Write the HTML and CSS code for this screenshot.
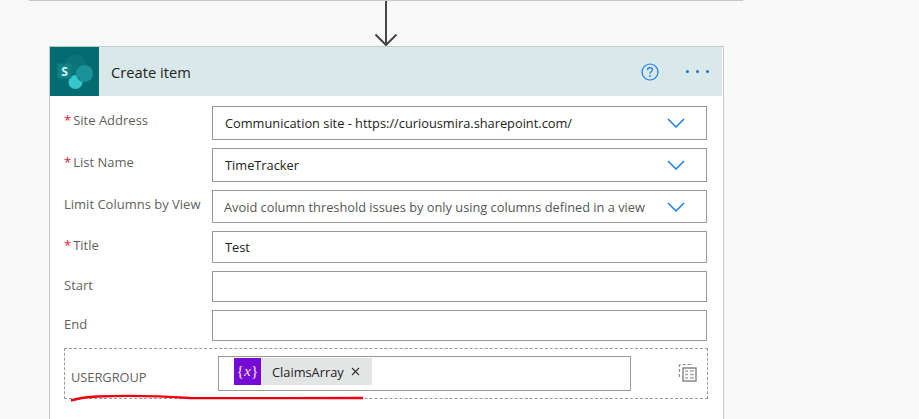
FILE: index.html
```html
<!DOCTYPE html>
<html lang="en">
<head>
<meta charset="UTF-8" />
<title>Create item</title>
<link rel="stylesheet" href="styles.css">
</head>
<body>
  <div class="top-line"></div>
  <svg class="arrow" width="26" height="45" viewBox="0 0 26 45">
    <path d="M13 0V44M2.500 33.500L13 44L23.500 33.500" fill="none" stroke="#444" stroke-width="2"/>
  </svg>

  <div class="card">
    <div class="card-header">
      <div class="logo">
        <svg width="36" height="36" viewBox="0 0 36 36">
          <circle cx="18.500" cy="10.500" r="10" fill="#0a7478"/>
          <circle cx="27.500" cy="19.500" r="8.500" fill="#1a9297"/>
          <circle cx="18.500" cy="28" r="7" fill="#37c6d0"/>
          <path d="M18.500 21A7 7 0 0 1 25.500 28A8.500 8.500 0 0 1 19 19Z" fill="#148a8f"/>
          <rect x="0.500" y="9.500" width="14" height="15" rx="1" fill="#0f8286"/>
          <text x="7.500" y="21.500" class="logo-s">S</text>
        </svg>
      </div>
      <div class="card-title">Create item</div>
      <svg class="help" width="18" height="18" viewBox="0 0 18 18">
        <circle cx="9" cy="9" r="8" fill="none" stroke="#1a7cf0" stroke-width="1.200"/>
        <path d="M6.500 7C6.500 5.500 7.700 4.700 9 4.700C10.400 4.700 11.500 5.500 11.500 6.800C11.500 8.500 9 8.700 9 10.800" fill="none" stroke="#1a7cf0" stroke-width="1.200"/>
        <circle cx="9" cy="13" r="0.900" fill="#1a7cf0"/>
      </svg>
      <div class="more"><span></span><span></span><span></span></div>
    </div>

    <div class="card-body">
      <div class="row row-34">
        <div class="label"><span class="req">*</span>Site Address</div>
        <div class="field">
          <span class="value">Communication site - https://curiousmira.sharepoint.com/</span>
          <svg class="chevron" width="18" height="10" viewBox="0 0 18 10"><path d="M1 1L9 9L17 1" fill="none" stroke="#1a7cf0" stroke-width="1.500"/></svg>
        </div>
      </div>
      <div class="row row-34">
        <div class="label"><span class="req">*</span>List Name</div>
        <div class="field">
          <span class="value">TimeTracker</span>
          <svg class="chevron" width="18" height="10" viewBox="0 0 18 10"><path d="M1 1L9 9L17 1" fill="none" stroke="#1a7cf0" stroke-width="1.500"/></svg>
        </div>
      </div>
      <div class="row row-33">
        <div class="label">Limit Columns by View</div>
        <div class="field">
          <span class="value placeholder">Avoid column threshold issues by only using columns defined in a view</span>
          <svg class="chevron" width="18" height="10" viewBox="0 0 18 10"><path d="M1 1L9 9L17 1" fill="none" stroke="#1a7cf0" stroke-width="1.500"/></svg>
        </div>
      </div>
      <div class="row row-32">
        <div class="label"><span class="req">*</span>Title</div>
        <div class="field"><span class="value">Test</span></div>
      </div>
      <div class="row row-31">
        <div class="label">Start</div>
        <div class="field"></div>
      </div>
      <div class="row row-31 row-last">
        <div class="label">End</div>
        <div class="field"></div>
      </div>

      <div class="dashed-row">
        <div class="dashed-label">USERGROUP</div>
        <div class="token-box">
          <div class="token">
            <div class="token-icon">{<i>x</i>}</div>
            <span class="token-name">ClaimsArray</span>
            <svg class="token-x" width="9" height="9" viewBox="0 0 9 9"><path d="M1 1L8 8M8 1L1 8" stroke="#333" stroke-width="1.100"/></svg>
          </div>
        </div>
        <svg class="table-icon" width="19" height="19" viewBox="0 0 19 19">
          <path d="M1.500 14V2.500A1 1 0 0 1 2.500 1.500H15" fill="none" stroke="#888" stroke-width="1.200" stroke-dasharray="3 2"/>
          <rect x="5" y="5" width="13" height="13" fill="#fff" stroke="#888" stroke-width="1.500"/>
          <path d="M7 8H10M12 8H16M7 11.500H10M12 11.500H16M7 15H10M12 15H16" stroke="#aaa" stroke-width="1.500"/>
        </svg>
      </div>
    </div>
  </div>

  <svg class="scribble" width="300" height="12" viewBox="0 0 300 12">
    <path d="M1 8.500C8 6.500 16 5 27 4.500C50 3.500 90 4 120 6C170 6.500 240 6 293 6" fill="none" stroke="#f0000f" stroke-width="2.400"/>
  </svg>
</body>
</html>
```

FILE: styles.css
```css
* {
  box-sizing: border-box;
}
body {
  margin: 0;
  height: 419px;
  overflow: hidden;
  position: relative;
  background: #f8f8f8;
  font-family: "Open Sans", "Noto Sans", sans-serif;
  font-size: 12.800px;
  color: #222;
}
.top-line {
  width: 714px;
  height: 1px;
  margin-left: 29px;
  background: #c8c8c8;
}
.arrow {
  display: block;
  margin-left: 373px;
}
.card {
  width: 675px;
  height: 374px;
  margin-left: 49px;
  background: #fff;
  border: 1px solid #c8c8c8;
  border-bottom: none;
}
.card-header {
  display: flex;
  align-items: center;
  height: 49px;
  margin-right: 1px;
  background: #d9e8e8;
}
.logo {
  display: flex;
  align-items: center;
  justify-content: center;
  width: 49px;
  height: 49px;
  background: #036c70;
}
.logo-s {
  fill: #d8f2f2;
  font-size: 12px;
  font-weight: 700;
  text-anchor: middle;
}
.card-title {
  flex: 1;
  margin-left: 12px;
  font-size: 14.700px;
  color: #222;
}
.help {
  margin-right: 27px;
}
.more {
  display: flex;
  gap: 7px;
  margin-right: 13px;
}
.more span {
  width: 3px;
  height: 3px;
  border-radius: 50%;
  background: #1273d6;
}
.card-body {
  display: flex;
  flex-direction: column;
  padding: 10px 16px 0 14px;
}
.row {
  display: flex;
  gap: 8px;
}
.row-34 {
  height: 34px;
  margin-bottom: 8px;
}
.row-33 {
  height: 33px;
  margin-bottom: 8px;
}
.row-32 {
  height: 32px;
  margin-bottom: 8px;
}
.row-31 {
  height: 31px;
  margin-bottom: 8px;
}
.row-last {
  margin-bottom: 7px;
}
.label {
  width: 140px;
  padding: 5px 0 0;
  white-space: nowrap;
  font-size: 13px;
  color: #5f5f5f;
}
.req {
  margin-right: 2px;
  color: #e8112d;
}
.field {
  display: flex;
  flex: 1;
  align-items: center;
  justify-content: space-between;
  padding: 0 21px 0 12px;
  border: 1px solid #999;
  background: #fff;
}
.placeholder {
  margin-left: -1px;
  color: #555;
}
.dashed-row {
  display: flex;
  align-items: flex-start;
  width: 644px;
  height: 51px;
  padding: 7px 0 0 6px;
  border: 1px dashed #999;
}
.dashed-label {
  width: 147px;
  padding-top: 12px;
  color: #5f5f5f;
}
.token-box {
  width: 413px;
  height: 35px;
  padding: 1px 0 0 15px;
  border: 1px solid #999;
}
.token {
  display: flex;
  align-items: center;
  width: 138px;
  height: 27px;
  background: #e3e5e5;
}
.token-icon {
  width: 27px;
  height: 27px;
  line-height: 25px;
  text-align: center;
  font-family: "Liberation Serif", serif;
  font-size: 15.500px;
  color: #f0e6fa;
  background: #770bd6;
}
.token-name {
  margin-left: 11px;
  color: #222;
}
.token-x {
  margin-left: 7px;
}
.table-icon {
  margin: 7px 0 0 47px;
}
.scribble {
  position: absolute;
  left: 70px;
  top: 392px;
}
```
